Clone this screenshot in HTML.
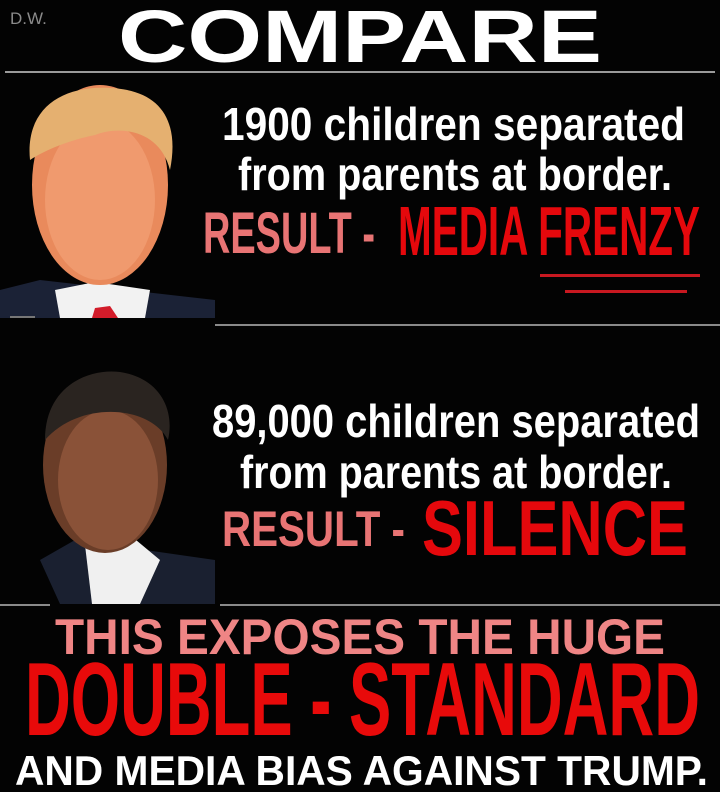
<!DOCTYPE html>
<html><head><style>
html,body{margin:0;padding:0;background:#000;width:720px;height:792px;overflow:hidden}
svg{display:block}
text{font-family:"Liberation Sans",Arial,sans-serif;font-weight:bold}
</style></head><body>
<svg width="720" height="792" viewBox="0 0 720 792">
<rect width="720" height="792" fill="#030303"/>
<text x="10" y="24" font-size="17" fill="#8a8a8a" style="font-weight:normal">D.W.</text>
<text x="118" y="62" font-size="74" fill="#fff" textLength="484" lengthAdjust="spacingAndGlyphs">COMPARE</text>
<rect x="5" y="71" width="710" height="2" fill="#9a9a9a"/>
<!-- Trump -->
<path d="M0 290 L40 280 L215 300 L215 318 L0 318Z" fill="#1b2236"/>
<path d="M55 290 L95 282 L150 290 L145 318 L60 318Z" fill="#f2f2f2"/>
<path d="M95 308 L110 306 L118 318 L92 318Z" fill="#d21c2a"/>
<ellipse cx="100" cy="185" rx="68" ry="100" fill="#e98a5c"/>
<ellipse cx="100" cy="200" rx="55" ry="80" fill="#f09a6e"/>
<path d="M30 160 C25 110 60 85 110 88 C160 90 180 120 170 170 C160 130 120 125 95 135 C70 140 45 150 30 160Z" fill="#e5b070"/>
<rect x="10" y="316" width="25" height="2" fill="#777"/>
<text x="222" y="140" font-size="46" fill="#fff" textLength="463" lengthAdjust="spacingAndGlyphs">1900 children separated</text>
<text x="238" y="190" font-size="46" fill="#fff" textLength="434" lengthAdjust="spacingAndGlyphs">from parents at border.</text>
<text x="203" y="253" font-size="58" fill="#e87474" textLength="172" lengthAdjust="spacingAndGlyphs">RESULT -</text>
<text x="398" y="255" font-size="70" fill="#e5080c" textLength="302" lengthAdjust="spacingAndGlyphs">MEDIA FRENZY</text>
<rect x="540" y="274" width="160" height="3" fill="#c81820"/>
<rect x="565" y="290" width="122" height="3" fill="#c81820"/>
<rect x="215" y="324" width="505" height="2" fill="#8a8a8a"/>
<!-- Obama -->
<path d="M40 560 L75 540 L215 560 L215 604 L60 604Z" fill="#1a2030"/>
<path d="M85 545 L130 535 L160 560 L140 604 L92 604Z" fill="#f0f0f0"/>
<ellipse cx="105" cy="465" rx="62" ry="88" fill="#6a3d28"/>
<ellipse cx="108" cy="480" rx="50" ry="70" fill="#8a5238"/>
<path d="M45 440 C45 385 90 368 120 372 C160 378 175 410 168 440 C150 405 80 400 45 440Z" fill="#2a2420"/>
<text x="212" y="437" font-size="46" fill="#fff" textLength="488" lengthAdjust="spacingAndGlyphs">89,000 children separated</text>
<text x="240" y="488" font-size="46" fill="#fff" textLength="432" lengthAdjust="spacingAndGlyphs">from parents at border.</text>
<text x="222" y="546" font-size="50" fill="#e87474" textLength="183" lengthAdjust="spacingAndGlyphs">RESULT -</text>
<text x="422" y="555" font-size="78" fill="#e5080c" textLength="266" lengthAdjust="spacingAndGlyphs">SILENCE</text>
<rect x="0" y="604" width="50" height="2" fill="#8a8a8a"/>
<rect x="220" y="604" width="500" height="2" fill="#8a8a8a"/>
<text x="55" y="654" font-size="50" fill="#ef8585" textLength="610" lengthAdjust="spacingAndGlyphs">THIS EXPOSES  THE  HUGE</text>
<text x="25" y="735" font-size="104" fill="#e80a0a" textLength="675" lengthAdjust="spacingAndGlyphs">DOUBLE - STANDARD</text>
<text x="15" y="785" font-size="42" fill="#fff" textLength="693" lengthAdjust="spacingAndGlyphs">AND MEDIA BIAS AGAINST TRUMP.</text>
</svg>
</body></html>
